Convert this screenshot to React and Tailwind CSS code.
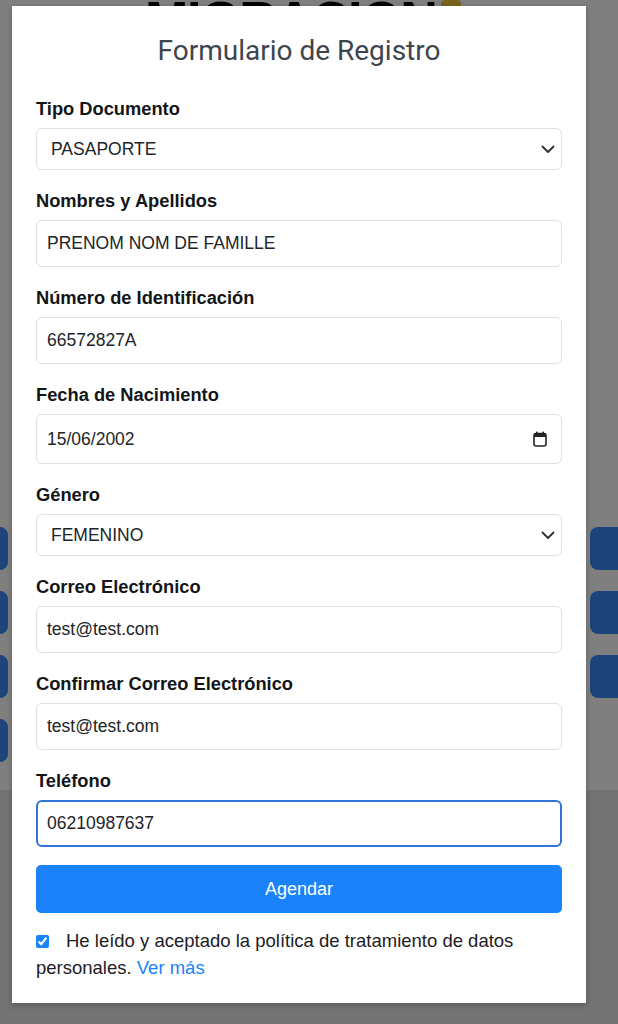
import React from 'react';

const Chevron = () => (
  <svg width="14" height="9" viewBox="0 0 14 9" fill="none" className="pointer-events-none">
    <path d="M1.5 1.5L7 7l5.5-5.5" stroke="#2b2f33" strokeWidth="1.8" strokeLinecap="round" strokeLinejoin="round" />
  </svg>
);

const CalendarIcon = () => (
  <svg width="14" height="16" viewBox="0 0 14 16" fill="none" className="pointer-events-none">
    <rect x="3" y="0.5" width="1.6" height="3" rx="0.6" fill="#1f2326" />
    <rect x="9.4" y="0.5" width="1.6" height="3" rx="0.6" fill="#1f2326" />
    <rect x="1" y="2.5" width="12" height="12.5" rx="2" stroke="#1f2326" strokeWidth="1.6" />
    <rect x="1" y="2.5" width="12" height="3.4" rx="1.2" fill="#1f2326" />
  </svg>
);

const Field = ({ label, children, last }) => (
  <div className={last ? 'mb-[18px]' : 'mb-[19px]'}>
    <label className="block h-6 leading-6 mb-[7px] text-[18.3px] font-bold text-[#131517]">{label}</label>
    {children}
  </div>
);

const TextInput = ({ value, focused }) => (
  <input
    readOnly
    value={value}
    className={`w-full h-[47px] rounded-[6px] bg-white text-[17.5px] text-[#222528] outline-none ${
      focused ? 'border-2 border-[#2f74d6] px-[9px]' : 'border border-[#dcdfe3] px-[10px]'
    }`}
  />
);

const SelectBox = ({ value }) => (
  <div className="relative">
    <select
      value={value}
      onChange={() => {}}
      className="w-full h-[42px] appearance-none rounded-[6px] border border-[#dcdfe3] bg-white pl-[14px] pr-10 text-[17.5px] text-[#222528] outline-none"
    >
      <option value={value}>{value}</option>
    </select>
    <div className="absolute right-[7px] top-0 h-full flex items-center">
      <Chevron />
    </div>
  </div>
);

const DateBox = ({ value }) => (
  <div className="flex items-center h-[50px] rounded-[6px] border border-[#dcdfe3] bg-white pl-[10px] pr-[14px]">
    <span className="flex-1 text-[17.5px] text-[#222528]">{value}</span>
    <CalendarIcon />
  </div>
);

export default function App() {
  return (
    <div className="relative w-[618px] h-[1024px] overflow-hidden bg-[#e6e6e6]" style={{ fontFamily: '"Liberation Sans", Arial, sans-serif' }}>
      {/* page behind the modal */}
      <div className="bg-white h-[790px] flex flex-col">
        <div className="-mt-[6px] pl-[145px] flex items-start gap-1">
          <span className="text-[52px] leading-none font-black tracking-tight text-black">MIGRACION</span>
          <span className="mt-[6px] w-5 h-4 bg-[#f2c53d] rounded-sm" />
        </div>
        <div className="mt-[481px] flex justify-between">
          <div className="flex flex-col gap-[21px] -ml-8">
            <div className="w-10 h-[43px] rounded-lg bg-[#3d8af7]" />
            <div className="w-10 h-[43px] rounded-lg bg-[#3d8af7]" />
            <div className="w-10 h-[43px] rounded-lg bg-[#3d8af7]" />
            <div className="w-10 h-[43px] rounded-lg bg-[#3d8af7]" />
          </div>
          <div className="flex flex-col gap-[21px] -mr-3">
            <div className="w-10 h-[43px] rounded-lg bg-[#3d8af7]" />
            <div className="w-10 h-[43px] rounded-lg bg-[#3d8af7]" />
            <div className="w-10 h-[43px] rounded-lg bg-[#3d8af7]" />
          </div>
        </div>
      </div>

      {/* overlay + modal */}
      <div className="absolute inset-0 bg-black/50">
        <div className="ml-[12px] mt-[6px] w-[574px] bg-white shadow-[0_2px_6px_rgba(0,0,0,0.25)] px-6 pt-[29px] pb-[22px]">
          <h2 className="text-center text-[28px] leading-8 text-[#3e454d] mb-[30px]" style={{ fontFamily: 'Roboto, "Liberation Sans", sans-serif' }}>
            Formulario de Registro
          </h2>

          <Field label="Tipo Documento">
            <SelectBox value="PASAPORTE" />
          </Field>
          <Field label="Nombres y Apellidos">
            <TextInput value="PRENOM NOM DE FAMILLE" />
          </Field>
          <Field label="Número de Identificación">
            <TextInput value="66572827A" />
          </Field>
          <Field label="Fecha de Nacimiento">
            <DateBox value="15/06/2002" />
          </Field>
          <Field label="Género">
            <SelectBox value="FEMENINO" />
          </Field>
          <Field label="Correo Electrónico">
            <TextInput value="test@test.com" />
          </Field>
          <Field label="Confirmar Correo Electrónico">
            <TextInput value="test@test.com" />
          </Field>
          <Field label="Teléfono" last>
            <TextInput value="06210987637" focused />
          </Field>

          <button className="w-full h-[48px] rounded-[5px] bg-[#1a82fb] text-white text-[18px]">
            Agendar
          </button>

          <p className="mt-[14px] text-[18.5px] leading-[27px] text-[#1d2024]">
            <input type="checkbox" checked readOnly className="w-[13px] h-[13px] align-[-1px] mr-[17px] accent-[#1a82fb]" />
            He leído y aceptado la política de tratamiento de datos personales.{' '}
            <a href="#" className="text-[#1a82fb]">Ver más</a>
          </p>
        </div>
      </div>
    </div>
  );
}
